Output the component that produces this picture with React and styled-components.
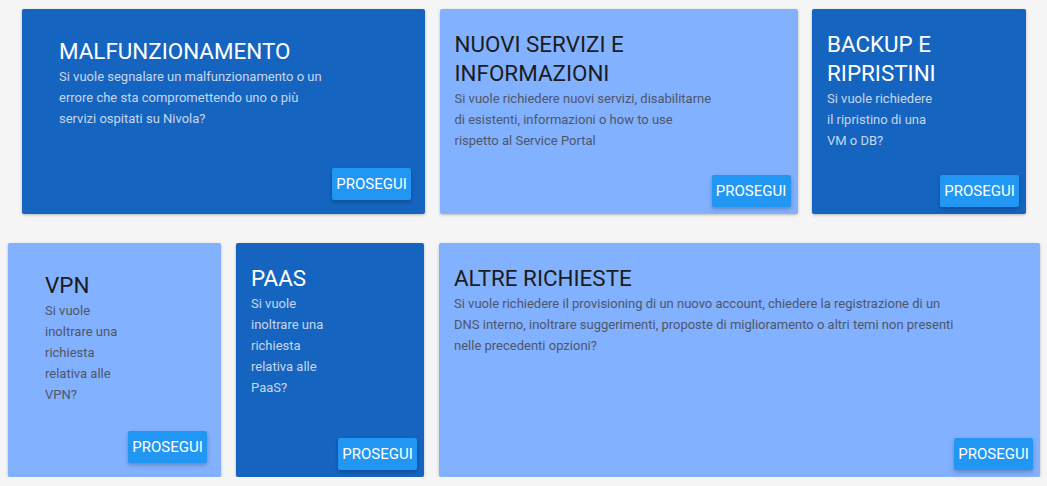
import React from 'react';
import styled, { createGlobalStyle } from 'styled-components';

const GlobalStyle = createGlobalStyle`
  html, body {
    margin: 0;
    padding: 0;
    background: #f5f5f5;
    font-family: Roboto, "Liberation Sans", Arial, sans-serif;
  }
`;

const Page = styled.div`
  display: flex;
  flex-direction: column;
  gap: 29px;
  padding-top: 9px;
  width: 1047px;
`;

const Row = styled.div`
  display: flex;
  gap: ${({ gap }) => gap}px;
  padding-left: ${({ offset }) => offset}px;
`;

const Card = styled.div`
  box-sizing: border-box;
  display: flex;
  flex-direction: column;
  width: ${({ w }) => w}px;
  height: ${({ h }) => h}px;
  padding: ${({ inset }) => (inset ? '28px 14px 14px 37px' : '21px 7px 7px 15px')};
  background: ${({ dark }) => (dark ? '#1565c0' : '#82b1ff')};
  border-radius: 2px;
  box-shadow: 0 1px 3px rgba(0, 0, 0, 0.25);
`;

const Content = styled.div`
  width: ${({ tw }) => tw}px;
`;

const Title = styled.h2`
  margin: 0;
  font-size: 22.4px;
  font-weight: 400;
  line-height: 29px;
  white-space: ${({ nowrap }) => (nowrap ? 'nowrap' : 'normal')};
  color: ${({ dark }) => (dark ? '#ffffff' : '#1c1c1c')};
`;

const Text = styled.p`
  margin: 0;
  font-size: 13px;
  line-height: 21px;
  color: ${({ dark }) => (dark ? '#c7d6ee' : '#4f5668')};
`;

const Button = styled.button`
  margin-top: auto;
  align-self: flex-end;
  width: 79px;
  height: 32px;
  padding: 0;
  border: none;
  border-radius: 2px;
  background: #2196f3;
  color: #ffffff;
  font-family: Roboto, sans-serif;
  font-size: 15px;
  box-shadow: 0 2px 4px rgba(0, 0, 0, 0.25);
  cursor: pointer;
`;

const rows = [
  {
    offset: 22,
    gap: 14.5,
    height: 205,
    cards: [
      {
        w: 403, dark: true, inset: true, tw: 275,
        title: 'MALFUNZIONAMENTO',
        text: 'Si vuole segnalare un malfunzionamento o un errore che sta compromettendo uno o più servizi ospitati su Nivola?',
      },
      {
        w: 358, dark: false, tw: 264,
        title: 'NUOVI SERVIZI E INFORMAZIONI',
        text: 'Si vuole richiedere nuovi servizi, disabilitarne di esistenti, informazioni o how to use rispetto al Service Portal',
      },
      {
        w: 214, dark: true, tw: 110,
        title: 'BACKUP E RIPRISTINI',
        text: 'Si vuole richiedere il ripristino di una VM o DB?',
      },
    ],
  },
  {
    offset: 8,
    gap: 15,
    height: 234,
    cards: [
      {
        w: 213, dark: false, inset: true, tw: 80,
        title: 'VPN',
        text: 'Si vuole inoltrare una richiesta relativa alle VPN?',
      },
      {
        w: 188, dark: true, tw: 80,
        title: 'PAAS',
        text: 'Si vuole inoltrare una richiesta relativa alle PaaS?',
      },
      {
        w: 601, dark: false, tw: 500,
        title: 'ALTRE RICHIESTE',
        text: 'Si vuole richiedere il provisioning di un nuovo account, chiedere la registrazione di un DNS interno, inoltrare suggerimenti, proposte di miglioramento o altri temi non presenti nelle precedenti opzioni?',
      },
    ],
  },
];

export default function App() {
  return (
    <>
      <GlobalStyle />
      <Page>
        {rows.map((row, i) => (
          <Row key={i} offset={row.offset} gap={row.gap}>
            {row.cards.map((c) => (
              <Card key={c.title} w={c.w} h={row.height} dark={c.dark} inset={c.inset}>
                <Content tw={c.tw}>
                  <Title dark={c.dark}>{c.title}</Title>
                  <Text dark={c.dark}>{c.text}</Text>
                </Content>
                <Button>PROSEGUI</Button>
              </Card>
            ))}
          </Row>
        ))}
      </Page>
    </>
  );
}
